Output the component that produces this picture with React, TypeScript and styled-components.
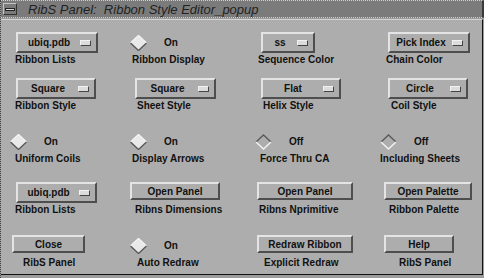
import styled, { createGlobalStyle } from "styled-components";

const GlobalStyle = createGlobalStyle`
  html, body {
    margin: 0;
    padding: 0;
    background: #9c9c9c;
  }
  body {
    font-family: "Liberation Sans", Arial, sans-serif;
  }
`;

type Cell =
  | { kind: "option"; value: string; width: number; at: number; label: string; labelAt: number }
  | { kind: "toggle"; on: boolean; at: number; label: string; labelAt: number }
  | { kind: "push"; text: string; width: number; at: number; label: string; labelAt: number };

const rows: { top: number; cells: Cell[] }[] = [
  {
    top: 12,
    cells: [
      { kind: "option", value: "ubiq.pdb", width: 82, at: 11, label: "Ribbon Lists", labelAt: 10 },
      { kind: "toggle", on: true, at: 0, label: "Ribbon Display", labelAt: 2 },
      { kind: "option", value: "ss", width: 54, at: 6, label: "Sequence Color", labelAt: 3 },
      { kind: "option", value: "Pick Index", width: 82, at: 8, label: "Chain Color", labelAt: 6 },
    ],
  },
  {
    top: 12,
    cells: [
      { kind: "option", value: "Square", width: 80, at: 11, label: "Ribbon Style", labelAt: 10 },
      { kind: "option", value: "Square", width: 81, at: 5, label: "Sheet Style", labelAt: 7 },
      { kind: "option", value: "Flat", width: 80, at: 6, label: "Helix Style", labelAt: 8 },
      { kind: "option", value: "Circle", width: 80, at: 8, label: "Coil Style", labelAt: 11 },
    ],
  },
  {
    top: 19,
    cells: [
      { kind: "toggle", on: true, at: 5, label: "Uniform Coils", labelAt: 10 },
      { kind: "toggle", on: true, at: 0, label: "Display Arrows", labelAt: 2 },
      { kind: "toggle", on: false, at: 0, label: "Force Thru CA", labelAt: 5 },
      { kind: "toggle", on: false, at: 0, label: "Including Sheets", labelAt: 0 },
    ],
  },
  {
    top: 17,
    cells: [
      { kind: "option", value: "ubiq.pdb", width: 81, at: 11, label: "Ribbon Lists", labelAt: 10 },
      { kind: "push", text: "Open Panel", width: 90, at: 0, label: "Ribns Dimensions", labelAt: 5 },
      { kind: "push", text: "Open Panel", width: 96, at: 2, label: "Ribns Nprimitive", labelAt: 4 },
      { kind: "push", text: "Open Palette", width: 88, at: 4, label: "Ribbon Palette", labelAt: 9 },
    ],
  },
  {
    top: 19,
    cells: [
      { kind: "push", text: "Close", width: 73, at: 7, label: "RibS Panel", labelAt: 18 },
      { kind: "toggle", on: true, at: 0, label: "Auto Redraw", labelAt: 7 },
      { kind: "push", text: "Redraw Ribbon", width: 96, at: 2, label: "Explicit Redraw", labelAt: 9 },
      { kind: "push", text: "Help", width: 70, at: 4, label: "RibS Panel", labelAt: 19 },
    ],
  },
];

const Diamond = ({ on }: { on: boolean }) => (
  <svg width="17" height="16" viewBox="0 0 17 16">
    {on ? (
      <>
        <polygon points="8.5,0.5 16.5,8 8.5,15.5 0.5,8" fill="#e9e9e9" />
        <polyline points="0.5,8 8.5,0.5 16.5,8" fill="none" stroke="#f4f4f4" strokeWidth="1.4" />
        <polyline points="16.5,8 8.5,15.5 0.5,8" fill="none" stroke="#5a5a5a" strokeWidth="1.4" />
      </>
    ) : (
      <>
        <polygon points="8.5,1 16,8 8.5,15 1,8" fill="#adadad" />
        <polyline points="1,8 8.5,1 16,8" fill="none" stroke="#5a5a5a" strokeWidth="1.3" />
        <polyline points="16,8 8.5,15 1,8" fill="none" stroke="#f4f4f4" strokeWidth="1.3" />
      </>
    )}
  </svg>
);

const App = () => {
  return (
    <>
      <GlobalStyle />
      <Window>
        <TitleBar>
          <MenuBox>
            <MenuBar />
          </MenuBox>
          <Title>{"RibS Panel:  Ribbon Style Editor_popup"}</Title>
        </TitleBar>
        <Body>
          {rows.map((row, r) => (
            <Row key={r} $top={row.top}>
              {row.cells.map((cell, c) => (
                <Item key={c}>
                  <Slot $at={cell.at}>
                    {cell.kind === "option" && (
                      <OptionButton $width={cell.width}>
                        <OptionText>{cell.value}</OptionText>
                        <Indicator />
                      </OptionButton>
                    )}
                    {cell.kind === "toggle" && (
                      <Toggle>
                        <Diamond on={cell.on} />
                        <ToggleText>{cell.on ? "On" : "Off"}</ToggleText>
                      </Toggle>
                    )}
                    {cell.kind === "push" && (
                      <PushButton $width={cell.width}>{cell.text}</PushButton>
                    )}
                  </Slot>
                  <Caption $at={cell.labelAt}>{cell.label}</Caption>
                </Item>
              ))}
            </Row>
          ))}
        </Body>
      </Window>
    </>
  );
};

export default App;

const Window = styled.div`
  width: 484px;
  height: 278px;
  display: flex;
  flex-direction: column;
  box-sizing: border-box;
  border-left: 1px dotted #444;
  background: #9c9c9c;
`;

const TitleBar = styled.div`
  height: 18px;
  box-sizing: border-box;
  display: flex;
  align-items: center;
  background: #7b7b7b;
  border-top: 1px dotted #d0d0d0;
  border-bottom: 1px dotted #d0d0d0;
  border-right: 2px solid #3a3a3a;
`;

const MenuBox = styled.div`
  width: 14px;
  height: 12px;
  margin-left: 2px;
  box-sizing: border-box;
  border: 1px solid;
  border-color: #c4c4c4 #333 #333 #c4c4c4;
  display: flex;
  align-items: center;
  justify-content: center;
`;

const MenuBar = styled.div`
  width: 10px;
  height: 3px;
  box-sizing: border-box;
  border: 1px solid #222;
  background: #d8d8d8;
`;

const Title = styled.span`
  margin-left: 11px;
  font-size: 13px;
  font-style: italic;
  color: #222;
  white-space: pre;
`;

const Body = styled.div`
  margin-top: 1px;
  width: 482px;
  height: 256px;
  flex: none;
  box-sizing: border-box;
  background: #adadad;
  border-top: 1px solid #d4d4d4;
  border-right: 1px solid #111;
  border-bottom: 1px solid #111;
  padding-left: 4px;
`;

const Row = styled.div<{ $top: number }>`
  display: grid;
  grid-template-columns: 125px 125px 125px 1fr;
  margin-top: ${(p) => p.$top}px;
`;

const Item = styled.div`
  display: flex;
  flex-direction: column;
  align-items: flex-start;
`;

const Slot = styled.div<{ $at: number }>`
  height: 21px;
  margin-left: ${(p) => p.$at}px;
  display: flex;
  align-items: flex-start;
`;

const bevel = `
  box-sizing: border-box;
  background: #adadad;
  border: 2px solid;
  border-color: #e4e4e4 #4e4e4e #4e4e4e #e4e4e4;
  color: #111;
  font-size: 10px;
  font-weight: bold;
`;

const OptionButton = styled.div<{ $width: number }>`
  ${bevel}
  width: ${(p) => p.$width}px;
  height: 21px;
  display: flex;
  align-items: center;
`;

const OptionText = styled.span`
  flex: 1;
  text-align: center;
`;

const Indicator = styled.div`
  width: 11px;
  height: 6px;
  margin-right: 5px;
  box-sizing: border-box;
  background: #dcdcdc;
  border: 1px solid;
  border-color: #f2f2f2 #444 #444 #f2f2f2;
`;

const PushButton = styled.div<{ $width: number }>`
  ${bevel}
  width: ${(p) => p.$width}px;
  height: 18px;
  display: flex;
  align-items: center;
  justify-content: center;
`;

const Toggle = styled.div`
  height: 21px;
  display: flex;
  align-items: center;
  gap: 17px;
`;

const ToggleText = styled.span`
  font-size: 10px;
  font-weight: bold;
  color: #111;
`;

const Caption = styled.div<{ $at: number }>`
  margin-top: 1px;
  margin-left: ${(p) => p.$at}px;
  font-size: 10px;
  line-height: 12px;
  font-weight: bold;
  color: #111;
  white-space: nowrap;
`;
